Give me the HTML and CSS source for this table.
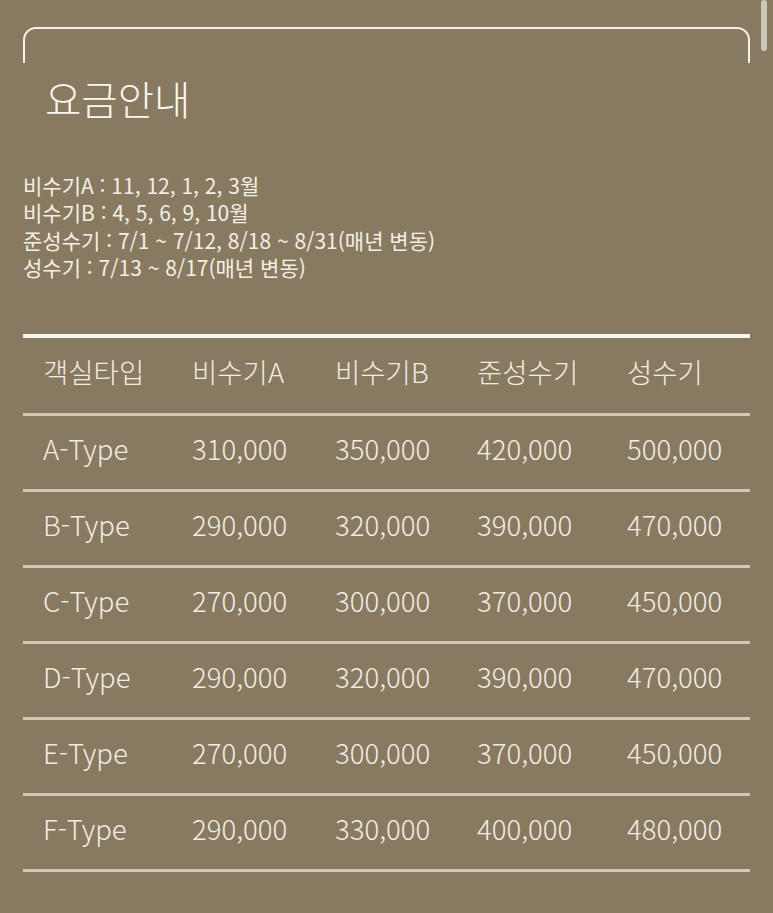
FILE: index.html
```html
<!DOCTYPE html>
<html lang="ko">
<head>
<meta charset="utf-8">
<title>요금안내</title>
<link rel="stylesheet" href="styles.css">
</head>
<body>
<div class="scrollbar"></div>
<div class="page">
  <div class="frame"></div>
  <h1 class="title">요금안내</h1>
  <div class="info">
    <p>비수기A : 11, 12, 1, 2, 3월</p>
    <p>비수기B : 4, 5, 6, 9, 10월</p>
    <p>준성수기 : 7/1 ~ 7/12, 8/18 ~ 8/31(매년 변동)</p>
    <p>성수기 : 7/13 ~ 8/17(매년 변동)</p>
  </div>
  <div class="table">
    <div class="row head"><span>객실타입</span><span>비수기A</span><span>비수기B</span><span>준성수기</span><span>성수기</span></div>
    <div class="row"><span>A-Type</span><span>310,000</span><span>350,000</span><span>420,000</span><span>500,000</span></div>
    <div class="row"><span>B-Type</span><span>290,000</span><span>320,000</span><span>390,000</span><span>470,000</span></div>
    <div class="row"><span>C-Type</span><span>270,000</span><span>300,000</span><span>370,000</span><span>450,000</span></div>
    <div class="row"><span>D-Type</span><span>290,000</span><span>320,000</span><span>390,000</span><span>470,000</span></div>
    <div class="row"><span>E-Type</span><span>270,000</span><span>300,000</span><span>370,000</span><span>450,000</span></div>
    <div class="row"><span>F-Type</span><span>290,000</span><span>330,000</span><span>400,000</span><span>480,000</span></div>
  </div>
</div>
</body>
</html>
```

FILE: styles.css
```css
html, body {
  margin: 0;
  padding: 0;
  background: #877a60;
}
body {
  font-family: "Noto Sans CJK KR", "Noto Sans", sans-serif;
  color: #f4efe5;
  overflow: hidden;
}
.scrollbar {
  position: absolute;
  top: 0;
  left: 761px;
  width: 6px;
  height: 51px;
  border-radius: 3px;
  background: #cdc7bb;
}
.page {
  padding: 27px 23px 0 23px;
  width: 727px;
}
.frame {
  height: 34px;
  border: 2px solid #f7f2e8;
  border-bottom: none;
  border-radius: 13px 13px 0 0;
}
.title {
  margin: 10px 0 0 22px;
  font-size: 39.5px;
  line-height: 50px;
  font-weight: 300;
  color: #fbf8f1;
}
.info {
  margin-top: 49px;
  font-size: 21px;
  line-height: 27.3px;
}
.info p {
  margin: 0;
}
.table {
  margin-top: 53px;
  border-top: 4px solid #fbf8ef;
}
.row {
  display: grid;
  grid-template-columns: 149px 143px 142px 150px 143px;
  height: 73px;
  align-items: center;
  border-bottom: 3px solid #d2c8b5;
  font-size: 27.5px;
  font-weight: 300;
  color: #f2ede3;
}
.row.head {
  height: 75px;
}
.row span {
  padding-left: 20px;
  padding-bottom: 9px;
}
```
